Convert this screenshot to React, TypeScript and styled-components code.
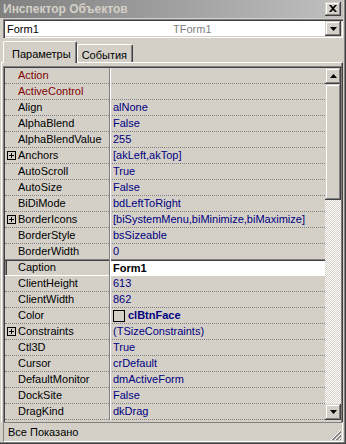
import { FC } from 'react'
import styled, { createGlobalStyle, css } from 'styled-components'

type PropRow = {
  name: string
  value?: string
  event?: boolean
  expand?: boolean
  selected?: boolean
  color?: boolean
}

const propList: PropRow[] = [
  { name: 'Action', event: true },
  { name: 'ActiveControl', event: true },
  { name: 'Align', value: 'alNone' },
  { name: 'AlphaBlend', value: 'False' },
  { name: 'AlphaBlendValue', value: '255' },
  { name: 'Anchors', value: '[akLeft,akTop]', expand: true },
  { name: 'AutoScroll', value: 'True' },
  { name: 'AutoSize', value: 'False' },
  { name: 'BiDiMode', value: 'bdLeftToRight' },
  { name: 'BorderIcons', value: '[biSystemMenu,biMinimize,biMaximize]', expand: true },
  { name: 'BorderStyle', value: 'bsSizeable' },
  { name: 'BorderWidth', value: '0' },
  { name: 'Caption', value: 'Form1', selected: true },
  { name: 'ClientHeight', value: '613' },
  { name: 'ClientWidth', value: '862' },
  { name: 'Color', value: 'clBtnFace', color: true },
  { name: 'Constraints', value: '(TSizeConstraints)', expand: true },
  { name: 'Ctl3D', value: 'True' },
  { name: 'Cursor', value: 'crDefault' },
  { name: 'DefaultMonitor', value: 'dmActiveForm' },
  { name: 'DockSite', value: 'False' },
  { name: 'DragKind', value: 'dkDrag' },
]

const GlobalStyle = createGlobalStyle`
  body {
    margin: 0;
    font-family: "Liberation Sans", Arial, sans-serif;
    font-size: 11px;
    color: #000;
  }
`

const raised = css`
  background: #d4d0c8;
  box-shadow: inset -1px -1px #404040, inset 1px 1px #d4d0c8,
    inset -2px -2px #808080, inset 2px 2px #fff;
`

const Arrow: FC<{ down?: boolean }> = ({ down }) => (
  <svg width="7" height="4" viewBox="0 0 7 4">
    {down ? <path d="M0 0h7L3.5 4z" fill="#000" /> : <path d="M0 4h7L3.5 0z" fill="#000" />}
  </svg>
)

export default function App() {
  return (
    <>
      <GlobalStyle />
      <StWindow>
        <StTitle>
          <span>Инспектор Объектов</span>
          <StCloseBtn>
            <svg width="8" height="7" viewBox="0 0 8 7">
              <path d="M0 0h2l2 2 2-2h2L5 3.5 8 7H6L4 5 2 7H0l3-3.5z" fill="#000" />
            </svg>
          </StCloseBtn>
        </StTitle>

        <StCombo>
          <StComboName>Form1</StComboName>
          <StComboType>TForm1</StComboType>
          <StComboBtn>
            <Arrow down />
          </StComboBtn>
        </StCombo>

        <StTabs>
          <StTab $active>Параметры</StTab>
          <StTab>События</StTab>
        </StTabs>

        <StPanel>
          <StGrid>
            <StRows>
              {propList.map((p) => (
                <StRow key={p.name} $selected={p.selected}>
                  <StName $event={p.event}>
                    {p.expand ? (
                      <StPlus>
                        <svg width="9" height="9" viewBox="0 0 9 9">
                          <rect x="0.5" y="0.5" width="8" height="8" fill="none" stroke="#000" />
                          <path d="M2 4.5h5M4.5 2v5" stroke="#000" />
                        </svg>
                      </StPlus>
                    ) : (
                      <StPlusGap />
                    )}
                    {p.name}
                  </StName>
                  <StDivider />
                  <StValue $selected={p.selected}>
                    {p.color && <StSwatch />}
                    {p.color ? <b>{p.value}</b> : p.value}
                  </StValue>
                </StRow>
              ))}
            </StRows>
            <StScrollbar>
              <StScrollBtn>
                <Arrow />
              </StScrollBtn>
              <StTrack>
                <StThumb />
              </StTrack>
              <StScrollBtn>
                <Arrow down />
              </StScrollBtn>
            </StScrollbar>
          </StGrid>
        </StPanel>

        <StStatus>
          Все Показано
          <StGrip>
            <svg width="12" height="12" viewBox="0 0 12 12">
              <path d="M11 1L1 11M11 5L5 11M11 9L9 11" stroke="#fff" />
              <path d="M11 2L2 11M11 3L3 11M11 6L6 11M11 7L7 11M11 10L10 11" stroke="#808080" />
            </svg>
          </StGrip>
        </StStatus>
      </StWindow>
    </>
  )
}

const StWindow = styled.div`
  width: 346px;
  height: 444px;
  box-sizing: border-box;
  padding: 0 3px 2px 0;
  background: #d4d0c8;
  display: flex;
  flex-direction: column;
  box-shadow: inset -1px -1px #404040, inset -2px -2px #808080;
  overflow: hidden;
`

const StTitle = styled.div`
  height: 18px;
  flex-shrink: 0;
  display: flex;
  align-items: center;
  justify-content: space-between;
  padding: 0 2px 0 3px;
  background: linear-gradient(to right, #808080, #c0c0c0);
  color: #d4d0c8;
  font-family: "Liberation Sans", Arial, sans-serif;
  font-weight: bold;
  font-size: 12px;
`

const StCloseBtn = styled.div`
  ${raised};
  width: 16px;
  height: 14px;
  display: flex;
  align-items: center;
  justify-content: center;
  padding-bottom: 1px;
  box-sizing: border-box;
`

const StCombo = styled.div`
  margin: 1px 0 0 3px;
  height: 19px;
  flex-shrink: 0;
  display: flex;
  align-items: center;
  background: #fff;
  box-sizing: border-box;
  padding: 2px;
  box-shadow: inset 1px 1px #808080, inset 2px 2px #404040,
    inset -1px -1px #fff, inset -2px -2px #d4d0c8;
`

const StComboName = styled.div`
  width: 166px;
  padding-left: 2px;
`

const StComboType = styled.div`
  flex: 1;
  color: #808080;
`

const StComboBtn = styled.div`
  ${raised};
  width: 16px;
  height: 15px;
  display: flex;
  align-items: center;
  justify-content: center;
  padding-top: 1px;
  box-sizing: border-box;
`

const StTabs = styled.div`
  margin: 2px 0 0 3px;
  height: 22px;
  flex-shrink: 0;
  display: flex;
  align-items: flex-end;
  position: relative;
  z-index: 1;
`

const StTab = styled.div<{ $active?: boolean }>`
  box-sizing: border-box;
  height: ${(p) => (p.$active ? 22 : 18)}px;
  margin-bottom: ${(p) => (p.$active ? -1 : 0)}px;
  padding: ${(p) => (p.$active ? '6px 5px 0 8px' : '4px 5px 0 4px')};
  background: #d4d0c8;
  border-left: 1px solid #fff;
  border-top: 1px solid #fff;
  border-right: 1px solid #404040;
  border-radius: 2px 2px 0 0;
  box-shadow: inset -1px 0 #808080;
`

const StPanel = styled.div`
  flex: 1;
  min-height: 0;
  display: flex;
  margin-left: 1px;
  padding: 3px 0 0 1px;
  border-top: 1px solid #fff;
  border-left: 1px solid #fff;
  border-right: 1px solid #404040;
  box-shadow: inset -1px 0 #808080;
`

const StGrid = styled.div`
  flex: 1;
  min-width: 0;
  display: flex;
  padding: 2px 1px 2px 2px;
  box-shadow: inset 1px 1px #808080, inset 2px 2px #404040;
`

const StRows = styled.div`
  flex: 1;
  min-width: 0;
  overflow: hidden;
`

const StRow = styled.div<{ $selected?: boolean }>`
  display: flex;
  height: 16px;
  box-sizing: border-box;
  line-height: 15px;
  border-bottom: 1px dotted #808080;
  white-space: nowrap;
  ${(p) =>
    p.$selected &&
    css`
      border-bottom: 1px solid #fff;
      box-shadow: 0 -1px #808080, inset 0 1px #404040, inset 1px 0 #808080,
        inset 2px 0 #404040;
    `}
`

const StName = styled.div<{ $event?: boolean }>`
  width: 104px;
  flex-shrink: 0;
  display: flex;
  align-items: center;
  padding-left: 2px;
  box-sizing: border-box;
  color: ${(p) => (p.$event ? '#800000' : '#000')};
  overflow: hidden;
`

const StPlus = styled.span`
  width: 9px;
  height: 9px;
  margin-right: 2px;
  display: flex;
`

const StPlusGap = styled.span`
  width: 11px;
  flex-shrink: 0;
`

const StDivider = styled.div`
  width: 2px;
  flex-shrink: 0;
  margin-bottom: -1px;
  box-shadow: inset 1px 0 #808080, inset -1px 0 #fff;
`

const StValue = styled.div<{ $selected?: boolean }>`
  flex: 1;
  min-width: 0;
  display: flex;
  align-items: center;
  padding-left: 2px;
  color: #000080;
  overflow: hidden;
  ${(p) =>
    p.$selected &&
    css`
      background: #fff;
      color: #000;
      font-weight: bold;
      margin-top: 1px;
    `}
  b {
    font-weight: bold;
  }
`

const StSwatch = styled.span`
  width: 10px;
  height: 10px;
  border: 1px solid #000;
  background: #d4d0c8;
  margin-right: 3px;
  flex-shrink: 0;
`

const StScrollbar = styled.div`
  width: 16px;
  flex-shrink: 0;
  display: flex;
  flex-direction: column;
`

const StScrollBtn = styled.div`
  ${raised};
  height: 16px;
  flex-shrink: 0;
  display: flex;
  align-items: center;
  justify-content: center;
`

const StTrack = styled.div`
  flex: 1;
  background: repeating-conic-gradient(#fff 0 25%, #d4d0c8 0 50%) 0 0 / 2px 2px;
`

const StThumb = styled.div`
  ${raised};
  height: 116px;
`

const StStatus = styled.div`
  height: 20px;
  flex-shrink: 0;
  margin: 0 0 0 3px;
  padding-left: 4px;
  display: flex;
  align-items: center;
  justify-content: space-between;
  box-sizing: border-box;
  border-top: 1px solid #808080;
  border-left: 1px solid #808080;
  border-bottom: 1px solid #fff;
  border-right: 1px solid #fff;
`

const StGrip = styled.div`
  align-self: flex-end;
  display: flex;
`
